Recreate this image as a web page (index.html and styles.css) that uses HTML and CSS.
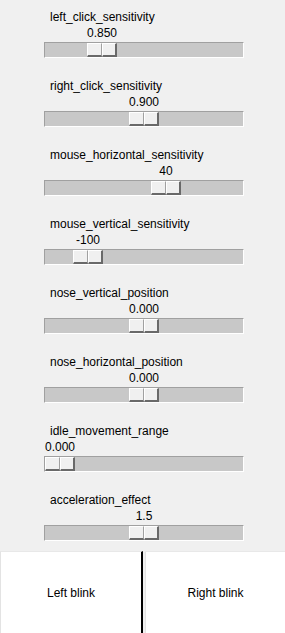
FILE: index.html
```html
<!DOCTYPE html>
<html>
<head>
<meta charset="utf-8">
<link rel="stylesheet" href="styles.css">
</head>
<body>
<div class="panel">
  <div class="row">
    <div class="label">left_click_sensitivity</div>
    <div class="value-line"><div class="value" style="margin-left:42px">0.850</div></div>
    <div class="trough"><div class="thumb" style="margin-left:42px"><span class="half"></span><span class="half"></span></div></div>
  </div>
  <div class="row">
    <div class="label">right_click_sensitivity</div>
    <div class="value-line"><div class="value" style="margin-left:84px">0.900</div></div>
    <div class="trough"><div class="thumb" style="margin-left:84px"><span class="half"></span><span class="half"></span></div></div>
  </div>
  <div class="row">
    <div class="label">mouse_horizontal_sensitivity</div>
    <div class="value-line"><div class="value" style="margin-left:106px">40</div></div>
    <div class="trough"><div class="thumb" style="margin-left:106px"><span class="half"></span><span class="half"></span></div></div>
  </div>
  <div class="row">
    <div class="label">mouse_vertical_sensitivity</div>
    <div class="value-line"><div class="value" style="margin-left:28px">-100</div></div>
    <div class="trough"><div class="thumb" style="margin-left:28px"><span class="half"></span><span class="half"></span></div></div>
  </div>
  <div class="row">
    <div class="label">nose_vertical_position</div>
    <div class="value-line"><div class="value" style="margin-left:84px">0.000</div></div>
    <div class="trough"><div class="thumb" style="margin-left:84px"><span class="half"></span><span class="half"></span></div></div>
  </div>
  <div class="row">
    <div class="label">nose_horizontal_position</div>
    <div class="value-line"><div class="value" style="margin-left:84px">0.000</div></div>
    <div class="trough"><div class="thumb" style="margin-left:84px"><span class="half"></span><span class="half"></span></div></div>
  </div>
  <div class="row">
    <div class="label">idle_movement_range</div>
    <div class="value-line"><div class="value" style="margin-left:0px">0.000</div></div>
    <div class="trough"><div class="thumb" style="margin-left:0px"><span class="half"></span><span class="half"></span></div></div>
  </div>
  <div class="row">
    <div class="label">acceleration_effect</div>
    <div class="value-line"><div class="value" style="margin-left:84px">1.5</div></div>
    <div class="trough"><div class="thumb" style="margin-left:84px"><span class="half"></span><span class="half"></span></div></div>
  </div>
</div>
<div class="buttons">
  <div class="btn btn-left">Left blink</div>
  <div class="btn btn-right">Right blink</div>
</div>
</body>
</html>
```

FILE: styles.css
```css
html, body {
  margin: 0;
  padding: 0;
  background: #f0f0f0;
  width: 285px;
  height: 633px;
  overflow: hidden;
}
body {
  font-family: "Liberation Sans", Arial, sans-serif;
  font-size: 12px;
  color: #000;
}
.panel {
  display: flex;
  flex-direction: column;
  gap: 20px;
  padding-top: 9px;
}
.row {
  display: flex;
  flex-direction: column;
}
.label {
  height: 16px;
  line-height: 16px;
  padding-left: 50px;
  white-space: nowrap;
}
.value-line {
  height: 16px;
  line-height: 16px;
  padding-left: 45px;
  margin-bottom: 1px;
  display: flex;
}
.value {
  width: 30px;
  display: flex;
  justify-content: center;
  white-space: nowrap;
}
.trough {
  margin-left: 44px;
  width: 200px;
  height: 16px;
  box-sizing: border-box;
  background: #c8c8c8;
  border-top: 1px solid #a0a0a0;
  border-left: 1px solid #a0a0a0;
  border-bottom: 1px solid #ffffff;
  border-right: 1px solid #ffffff;
  display: flex;
}
.thumb {
  width: 30px;
  height: 14px;
  display: flex;
}
.half {
  width: 15px;
  height: 14px;
  box-sizing: border-box;
  background: #f0f0f0;
  border-top: 1px solid #ffffff;
  border-left: 1px solid #ffffff;
  border-right: 1px solid #a0a0a0;
  border-bottom: 1px solid #a0a0a0;
}
.half:last-child {
  border-right: 2px solid #696969;
  border-bottom: 2px solid #696969;
}
.half:first-child {
  border-bottom: 2px solid #696969;
}
.buttons {
  margin-top: 10px;
  height: 82px;
  display: flex;
}
.btn {
  background: #ffffff;
  box-sizing: border-box;
  height: 82px;
  border-top: 1px solid #e8e8e8;
  border-left: 1px solid #e3e3e3;
  display: flex;
  align-items: center;
  justify-content: center;
  padding-top: 1px;
}
.btn-left {
  width: 143px;
  border-right: 2px solid #000;
}
.btn-right {
  flex: 1;
  margin-left: 2px;
}
```
